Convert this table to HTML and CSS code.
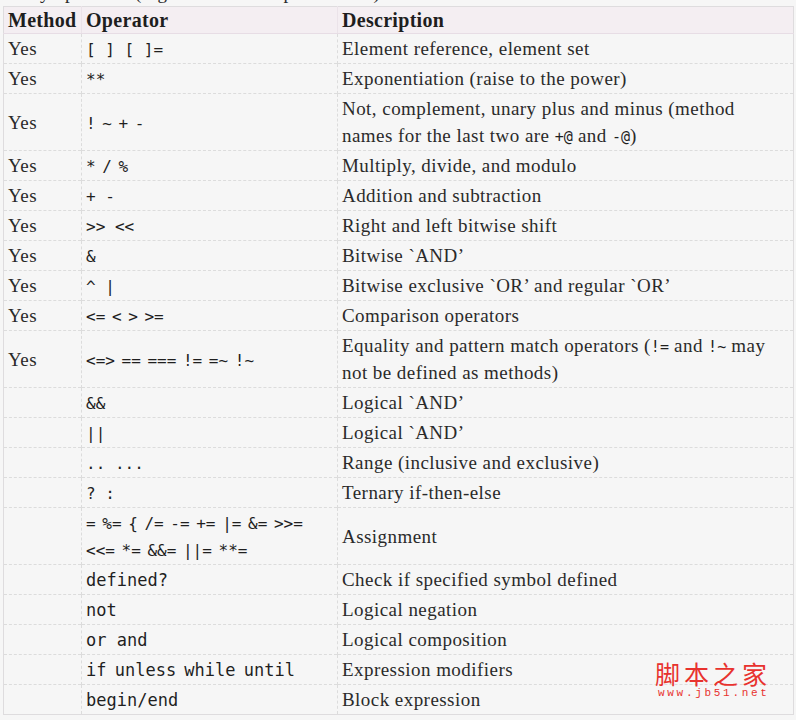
FILE: index.html
```html
<!DOCTYPE html>
<html lang="en">
<head>
<meta charset="utf-8">
<title>Ruby operators</title>
<link rel="stylesheet" href="styles.css">
</head>
<body>
<div class="intro"><p>Ruby operators (highest to lowest precedence)</p></div>
<table class="ops">
  <colgroup><col class="c1"><col class="c2"><col class="c3"></colgroup>
  <thead>
    <tr><th>Method</th><th>Operator</th><th>Description</th></tr>
  </thead>
  <tbody>
    <tr><td>Yes</td><td><code class="op">[ ] [ ]=</code></td><td>Element reference, element set</td></tr>
    <tr><td>Yes</td><td><code class="op">**</code></td><td>Exponentiation (raise to the power)</td></tr>
    <tr class="two"><td>Yes</td><td><code class="op tight">! ~ + -</code></td><td>Not, complement, unary plus and minus (method<br>names for the last two are <code class="in">+@</code> and <code class="in">-@</code>)</td></tr>
    <tr><td>Yes</td><td><code class="op tight">* / %</code></td><td>Multiply, divide, and modulo</td></tr>
    <tr><td>Yes</td><td><code class="op">+ -</code></td><td>Addition and subtraction</td></tr>
    <tr><td>Yes</td><td><code class="op">&gt;&gt; &lt;&lt;</code></td><td>Right and left bitwise shift</td></tr>
    <tr><td>Yes</td><td><code class="op">&amp;</code></td><td>Bitwise `AND’</td></tr>
    <tr><td>Yes</td><td><code class="op">^ |</code></td><td>Bitwise exclusive `OR’ and regular `OR’</td></tr>
    <tr><td>Yes</td><td><code class="op tight">&lt;= &lt; &gt; &gt;=</code></td><td>Comparison operators</td></tr>
    <tr class="two"><td>Yes</td><td><code class="op tight">&lt;=&gt; == === != =~ !~</code></td><td>Equality and pattern match operators (<code class="in">!=</code> and <code class="in">!~</code> may<br>not be defined as methods)</td></tr>
    <tr><td></td><td><code class="op">&amp;&amp;</code></td><td>Logical `AND’</td></tr>
    <tr><td></td><td><code class="op">||</code></td><td>Logical `AND’</td></tr>
    <tr><td></td><td><code class="op">.. ...</code></td><td>Range (inclusive and exclusive)</td></tr>
    <tr><td></td><td><code class="op">? :</code></td><td>Ternary if-then-else</td></tr>
    <tr class="two"><td></td><td><code class="op tight">= %= { /= -= += |= &amp;= &gt;&gt;=<br>&lt;&lt;= *= &amp;&amp;= ||= **=</code></td><td>Assignment</td></tr>
    <tr><td></td><td><code class="op kw">defined?</code></td><td>Check if specified symbol defined</td></tr>
    <tr><td></td><td><code class="op kw">not</code></td><td>Logical negation</td></tr>
    <tr><td></td><td><code class="op kw">or and</code></td><td>Logical composition</td></tr>
    <tr><td></td><td><code class="op kw words">if unless while until</code></td><td>Expression modifiers</td></tr>
    <tr><td></td><td><code class="op kw">begin/end</code></td><td>Block expression</td></tr>
  </tbody>
</table>
<div class="wm">
  <div class="wm-cn">脚本之家</div>
  <div class="wm-url">www.jb51.net</div>
</div>
</body>
</html>
```
FILE: styles.css
```css
html, body {
  margin: 0;
  background: #f6f6f6;
}
body {
  padding: 0 0 0 3px;
  font-family: "Liberation Serif", serif;
  color: #2a2a2a;
}
.intro {
  height: 6px;
  overflow: hidden;
}
.intro p {
  margin: -21px 0 0 4px;
  font-size: 19px;
  letter-spacing: 0.45px;
  line-height: 28px;
  white-space: nowrap;
}
.ops {
  width: 790px;
  table-layout: fixed;
  border-collapse: collapse;
  border: 1px solid #dedcde;
}
.c1 { width: 78px; }
.c2 { width: 256px; }
.c3 { width: 456px; }
.ops th {
  background: #f4eef2;
  text-align: left;
  font-weight: bold;
  font-size: 20px;
  letter-spacing: 0.3px;
  line-height: 26px;
  padding: 0 4px;
  color: #1e1e1e;
  border-bottom: 1px solid #e7dde5;
  border-left: 1px solid #ebe3e9;
}
.ops td {
  font-size: 19px;
  letter-spacing: 0.45px;
  line-height: 27px;
  padding: 1px 4px 1px;
  vertical-align: middle;
  border-top: 1px dashed #dcdcdc;
  border-left: 1px dashed #dcdcdc;
  white-space: nowrap;
}
.ops th:first-child, .ops td:first-child {
  border-left: 1px solid #dedcde;
  padding-left: 4px;
}
.op, .in {
  font-family: "DejaVu Sans Mono", monospace;
  line-height: 1;
  letter-spacing: 0;
  color: #1f1f1f;
}
.op {
  font-size: 16px;
}
.tight {
  word-spacing: -3px;
}
.kw {
  font-size: 17px;
}
.words {
  word-spacing: -2px;
}
.in {
  font-size: 15px;
}
.wm {
  position: absolute;
  left: 655px;
  top: 660px;
  color: #e8322e;
}
.wm-cn {
  font-family: "Noto Sans CJK SC", sans-serif;
  font-size: 25px;
  line-height: 27px;
  letter-spacing: 4px;
}
.wm-url {
  font-family: "Liberation Mono", monospace;
  font-size: 11px;
  line-height: 12px;
  letter-spacing: 2.7px;
  padding-left: 3px;
}
```
